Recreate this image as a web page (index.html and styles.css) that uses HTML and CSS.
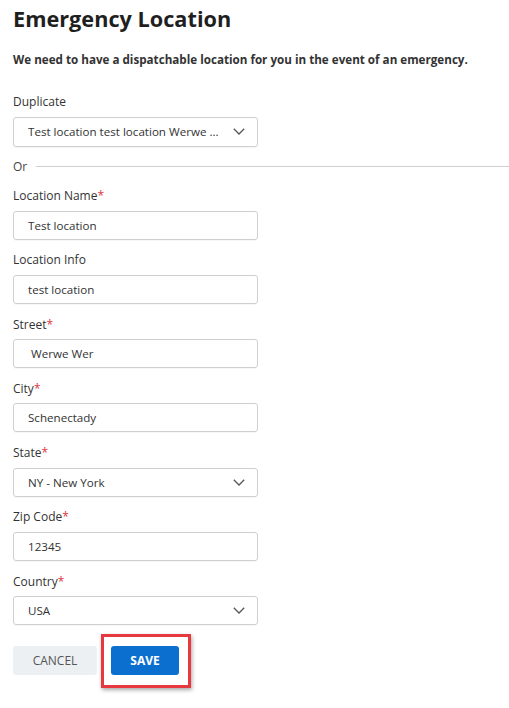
FILE: index.html
```html
<!DOCTYPE html>
<html>
<head>
<meta charset="utf-8">
<link rel="stylesheet" href="styles.css">
</head>
<body>
<div class="page">
  <h1 class="title">Emergency Location</h1>
  <p class="intro">We need to have a dispatchable location for you in the event of an emergency.</p>

  <div class="field first">
    <div class="label">Duplicate</div>
    <div class="select tall">
      <span class="value">Test location test location Werwe ...</span>
      <svg class="chev" width="12" height="7" viewBox="0 0 12 7"><polyline points="0.8,0.8 6,6 11.2,0.8" fill="none" stroke="#555" stroke-width="1.3"/></svg>
    </div>
  </div>

  <div class="or"><span>Or</span><span class="rule"></span></div>

  <div class="field">
    <div class="label">Location Name<span class="req">*</span></div>
    <div class="input">Test location</div>
  </div>
  <div class="field">
    <div class="label">Location Info</div>
    <div class="input">test location</div>
  </div>
  <div class="field">
    <div class="label">Street<span class="req">*</span></div>
    <div class="input"><span class="lead">Werwe Wer</span></div>
  </div>
  <div class="field">
    <div class="label">City<span class="req">*</span></div>
    <div class="input">Schenectady</div>
  </div>
  <div class="field">
    <div class="label">State<span class="req">*</span></div>
    <div class="select">
      <span class="value">NY - New York</span>
      <svg class="chev" width="12" height="7" viewBox="0 0 12 7"><polyline points="0.8,0.8 6,6 11.2,0.8" fill="none" stroke="#555" stroke-width="1.3"/></svg>
    </div>
  </div>
  <div class="field">
    <div class="label">Zip Code<span class="req">*</span></div>
    <div class="input">12345</div>
  </div>
  <div class="field">
    <div class="label">Country<span class="req">*</span></div>
    <div class="select">
      <span class="value">USA</span>
      <svg class="chev" width="12" height="7" viewBox="0 0 12 7"><polyline points="0.8,0.8 6,6 11.2,0.8" fill="none" stroke="#555" stroke-width="1.3"/></svg>
    </div>
  </div>

  <div class="actions">
    <button class="btn cancel">CANCEL</button>
    <span class="save-wrap">
      <button class="btn save">SAVE</button>
      <span class="highlight"></span>
    </span>
  </div>
</div>
</body>
</html>
```

FILE: styles.css
```css
html, body {
  margin: 0;
  padding: 0;
  background: #fff;
}
body {
  font-family: "Open Sans", "Noto Sans", sans-serif;
  color: #333;
}
.page {
  padding-left: 13px;
  padding-bottom: 32px;
}
.title {
  margin: 3.6px 0 0 0;
  font-size: 21.7px;
  line-height: 30px;
  font-weight: 700;
  color: #1f1f1f;
}
.intro {
  margin: 17.2px 0 0 0;
  font-size: 11.65px;
  line-height: 18px;
  font-weight: 700;
  color: #333;
}
.field {
  width: 245px;
  margin-bottom: 10.6px;
}
.field.first {
  margin-top: 23.2px;
  margin-bottom: 0;
}
.label {
  font-size: 12px;
  line-height: 20px;
  color: #333;
  margin-bottom: 4.7px;
}
.req {
  color: #e0343c;
}
.input, .select {
  box-sizing: border-box;
  height: 29px;
  border: 1px solid #cfcfcf;
  border-radius: 3px;
  padding: 0 12px 0 14px;
  font-size: 11.6px;
  color: #333;
  display: flex;
  align-items: center;
  box-shadow: 0 1px 1px rgba(0,0,0,0.04);
}
.select.tall {
  height: 30px;
}
.select .value {
  flex: 1;
  white-space: nowrap;
  overflow: hidden;
}
.lead {
  padding-left: 3px;
}
.chev {
  flex: none;
  margin-left: 8px;
}
.or {
  display: flex;
  align-items: center;
  margin: 10px 0 9.3px 0;
  font-size: 12px;
  line-height: 20px;
  color: #444;
}
.rule {
  flex: 1;
  height: 0;
  border-top: 1px solid #cfcfcf;
  margin-left: 9px;
}
.actions {
  display: flex;
  align-items: flex-start;
  gap: 14px;
  margin-top: 21px;
}
.btn {
  font-family: "Open Sans", "Noto Sans", sans-serif;
  font-size: 12px;
  height: 29px;
  border: none;
  border-radius: 3px;
  padding: 0;
  cursor: pointer;
}
.cancel {
  width: 84px;
  background: #edf0f3;
  color: #555;
}
.save-wrap {
  position: relative;
  display: block;
  height: 29px;
}
.save {
  width: 68px;
  background: #0b6fd0;
  color: #fff;
  font-weight: 700;
}
.highlight {
  position: absolute;
  left: -10px;
  top: -12px;
  width: 90px;
  height: 54px;
  box-sizing: border-box;
  border: 3px solid #e8383f;
  box-shadow: 1px 2px 4px rgba(0,0,0,0.35);
  pointer-events: none;
}
```
